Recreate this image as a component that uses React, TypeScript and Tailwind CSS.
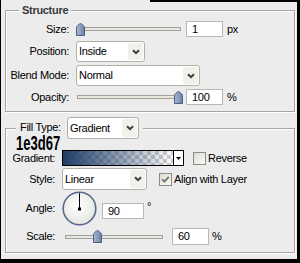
import React from "react";

function Thumb() {
  return (
    <svg width="9" height="13" viewBox="0 0 9 13">
      <defs>
        <linearGradient id="thumbg" x1="0" y1="0" x2="1" y2="0">
          <stop offset="0" stopColor="#a9b9d4" />
          <stop offset="1" stopColor="#6c81a8" />
        </linearGradient>
      </defs>
      <path
        d="M0.5 12.5 V4.6 Q0.5 3.6 1.4 2.8 L3.6 0.9 Q4.5 0.2 5.4 0.9 L7.6 2.8 Q8.5 3.6 8.5 4.6 V12.5 Z"
        fill="url(#thumbg)"
        stroke="#4b5d80"
      />
    </svg>
  );
}

function Slider({ w, left }: { w: string; left: number }) {
  return (
    <div className={`relative flex h-[13px] items-center ${w}`}>
      <div className="mx-[1px] h-[4px] flex-1 border border-[#a4a298] bg-[#e7e5de]" />
      <div className="absolute top-0" style={{ left }}>
        <Thumb />
      </div>
    </div>
  );
}

function Chevron() {
  return (
    <svg width="8" height="6" viewBox="0 0 8 6">
      <path d="M1 1.2 L4 4.2 L7 1.2" fill="none" stroke="#3e3e3e" strokeWidth="2" />
    </svg>
  );
}

function Select({ w, h, text }: { w: string; h: string; text: string }) {
  return (
    <div className={`flex ${w} ${h} items-center rounded-[3px] border border-[#b3b0a6] bg-white pl-[2px]`}>
      <span className="flex-1">{text}</span>
      <div className="mr-[1px] flex h-[calc(100%-2px)] w-[15px] items-center justify-center rounded-[2px] bg-[#f1f0eb]">
        <Chevron />
      </div>
    </div>
  );
}

function Input({ cls, value }: { cls: string; value: string }) {
  return (
    <div className={`flex items-center border border-[#b8b8b8] bg-white pl-[5px] ${cls}`}>{value}</div>
  );
}

function Check({ checked }: { checked?: boolean }) {
  return (
    <div className="flex h-[13px] w-[13px] items-center justify-center border border-[#8c8c86] bg-linear-to-br from-[#dddbd2] to-[#fbfbf8]">
      {checked && (
        <svg width="9" height="9" viewBox="0 0 9 9">
          <path d="M1.2 4.3 L3.4 6.6 L7.8 1.8" fill="none" stroke="#757575" strokeWidth="1.9" />
        </svg>
      )}
    </div>
  );
}

function Dial() {
  return (
    <svg width="36" height="36" viewBox="0 0 36 36">
      <defs>
        <radialGradient id="dialg" cx="0.45" cy="0.4" r="0.6">
          <stop offset="0" stopColor="#ffffff" />
          <stop offset="1" stopColor="#e6e6e0" />
        </radialGradient>
      </defs>
      <circle cx="17.5" cy="17.5" r="16.3" fill="url(#dialg)" stroke="#56698f" strokeWidth="1.6" />
      <line x1="17.5" y1="18" x2="17.5" y2="2.2" stroke="#000" strokeWidth="1" />
      <rect x="16" y="16.5" width="3" height="3" fill="#000" />
    </svg>
  );
}

export default function App() {
  return (
    <div className="flex h-[263px] w-[300px] flex-col bg-black font-['Liberation_Sans',Arial,sans-serif] text-[11px] leading-[13px] tracking-[-0.3px] text-black">
      <div className="flex h-[2px]">
        <div className="ml-[1px] w-[149px] bg-[#ececec]" />
      </div>
      <div className="ml-[1px] flex h-[257px] w-[296px] flex-col bg-[#ececec]">
        {/* Structure group */}
        <div className="ml-[4px] mt-[8px] flex h-[102px] w-[290px] flex-col border border-[#a6a59d] shadow-[1px_1px_0_#fff,inset_1px_1px_0_#fff]">
          <div className="-mt-[7px] ml-[13px] flex h-[13px] w-fit items-center bg-[#ececec] px-[3px] font-bold text-[#3a3a3a]">
            Structure
          </div>
          <div className="mt-[4px] flex h-[16px] items-center">
            <div className="w-[63px] text-right">Size:</div>
            <div className="ml-[7px]">
              <Slider w="w-[106px]" left={0} />
            </div>
            <Input cls="ml-[4px] h-[16px] w-[37px]" value="1" />
            <span className="ml-[4px]">px</span>
          </div>
          <div className="mt-[4px] flex h-[21px] items-center">
            <div className="w-[63px] text-right">Position:</div>
            <div className="ml-[7px]">
              <Select w="w-[69px]" h="h-[21px]" text="Inside" />
            </div>
          </div>
          <div className="mt-[3px] flex h-[21px] items-center">
            <div className="w-[63px] text-right">Blend Mode:</div>
            <div className="ml-[7px]">
              <Select w="w-[124px]" h="h-[21px]" text="Normal" />
            </div>
          </div>
          <div className="mt-[3px] flex h-[16px] items-center">
            <div className="w-[63px] text-right">Opacity:</div>
            <div className="ml-[7px]">
              <Slider w="w-[106px]" left={98} />
            </div>
            <Input cls="ml-[4px] h-[16px] w-[37px]" value="100" />
            <span className="ml-[4px]">%</span>
          </div>
        </div>

        {/* Fill group */}
        <div className="ml-[4px] mt-[16px] flex h-[125px] w-[290px] flex-col border border-[#a6a59d] shadow-[1px_1px_0_#fff,inset_1px_1px_0_#fff]">
          <div className="-mt-[12px] ml-[10px] flex h-[22px] w-fit items-center bg-[#ececec] px-[4px]">
            <span className="-mt-[1px] w-[47px]">Fill Type:</span>
            <Select w="w-[72px]" h="h-[22px]" text="Gradient" />
          </div>
          <div className="-mt-[4px] ml-[10px] h-[15px]">
            <span className="inline-block origin-left scale-x-[62%] text-[21px] leading-[15px] font-bold tracking-normal">
              1e3d67
            </span>
          </div>
          <div className="flex h-[16px] items-center">
            <div className="w-[49px] text-right">Gradient:</div>
            <div className="ml-[7px] flex h-[16px] w-[122px] border border-black">
              <div className="flex-1 bg-[image:repeating-conic-gradient(#cdcdcd_0_25%,#ffffff_0_50%)] bg-[length:8px_8px]">
                <div className="h-full w-full bg-linear-to-r from-[#1e3d67] to-[#1e3d6700]" />
              </div>
              <div className="flex w-[10px] items-center justify-center border-l border-black bg-white">
                <svg width="5" height="3" viewBox="0 0 5 3">
                  <path d="M0 0 H5 L2.5 3 Z" fill="#000" />
                </svg>
              </div>
            </div>
            <div className="ml-[9px]">
              <Check />
            </div>
            <span className="ml-[2px]">Reverse</span>
          </div>
          <div className="mt-[2px] flex h-[22px] items-center">
            <div className="w-[49px] text-right">Style:</div>
            <div className="ml-[7px]">
              <Select w="w-[85px]" h="h-[22px]" text="Linear" />
            </div>
            <div className="ml-[12px]">
              <Check checked />
            </div>
            <span className="ml-[2px]">Align with Layer</span>
          </div>
          <div className="flex h-[36px] items-start">
            <div className="mt-[12px] w-[49px] text-right">Angle:</div>
            <div className="ml-[7px] mt-[1px]">
              <Dial />
            </div>
            <Input cls="ml-[4px] mt-[13px] h-[16px] w-[42px]" value="90" />
            <span className="ml-[3px] mt-[10px]">°</span>
          </div>
          <div className="mt-[2px] flex h-[17px] items-center">
            <div className="w-[49px] text-right">Scale:</div>
            <div className="ml-[9px]">
              <Slider w="w-[100px]" left={29} />
            </div>
            <Input cls="ml-[8px] h-[17px] w-[37px]" value="60" />
            <span className="ml-[3px]">%</span>
          </div>
        </div>
      </div>
    </div>
  );
}
